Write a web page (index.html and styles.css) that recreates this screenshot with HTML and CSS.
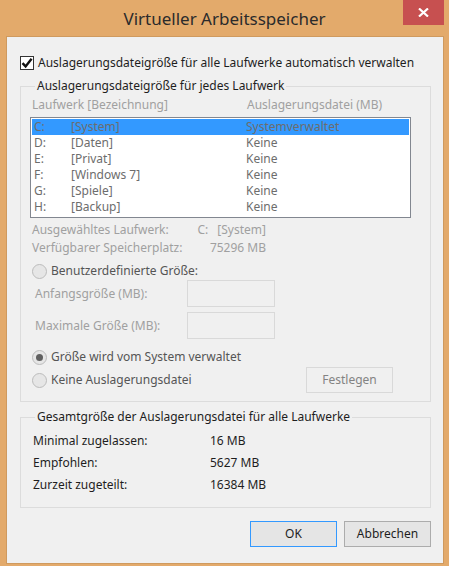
FILE: index.html
```html
<!DOCTYPE html>
<html>
<head>
	<meta charset="utf-8"/>
	<title>Virtueller Arbeitsspeicher</title>
	<link rel="stylesheet" href="styles.css">
</head>
<body>
	<div id="dialog">
		<div id="caption">
			<span class="caption-title">Virtueller Arbeitsspeicher</span>
			<div class="close">
				<svg width="11" height="9" viewBox="0 0 11 9"><path d="M1 0.5L10 8.5M10 0.5L1 8.5" stroke="#fff" stroke-width="2.2" fill="none"/></svg>
			</div>
		</div>
		<div id="client">
			<label class="auto">
				<span class="checkbox"><svg width="12" height="12" viewBox="0 0 12 12"><path d="M1.5 6.2L4.6 9.4L10.6 1.8" stroke="#111" stroke-width="2.4" fill="none"/></svg></span>
				Auslagerungsdateigröße für alle Laufwerke automatisch verwalten
			</label>
			<fieldset class="group" id="drives">
				<legend>Auslagerungsdateigröße für jedes Laufwerk</legend>
				<div class="columns">
					<span>Laufwerk [Bezeichnung]</span>
					<span>Auslagerungsdatei (MB)</span>
				</div>
				<ul id="list">
					<li class="selected"><span>C:</span><span>[System]</span><span>Systemverwaltet</span></li>
					<li><span>D:</span><span>[Daten]</span><span>Keine</span></li>
					<li><span>E:</span><span>[Privat]</span><span>Keine</span></li>
					<li><span>F:</span><span>[Windows 7]</span><span>Keine</span></li>
					<li><span>G:</span><span>[Spiele]</span><span>Keine</span></li>
					<li><span>H:</span><span>[Backup]</span><span>Keine</span></li>
				</ul>
				<div class="info selected-drive">
					<span>Ausgewähltes Laufwerk:</span>
					<span class="drive-name"><span>C:</span><span>[System]</span></span>
				</div>
				<div class="info">
					<span>Verfügbarer Speicherplatz:</span>
					<span>75296 MB</span>
				</div>
				<label class="option custom"><span class="radio"></span>Benutzerdefinierte Größe:</label>
				<div class="size-row initial-size">
					<span>Anfangsgröße (MB):</span>
					<span class="textbox"></span>
				</div>
				<div class="size-row">
					<span>Maximale Größe (MB):</span>
					<span class="textbox"></span>
				</div>
				<label class="option system"><span class="radio checked"></span>Größe wird vom System verwaltet</label>
				<div class="last-row">
					<label class="option"><span class="radio"></span>Keine Auslagerungsdatei</label>
					<div class="button disabled">Festlegen</div>
				</div>
			</fieldset>
			<fieldset class="group" id="total">
				<legend>Gesamtgröße der Auslagerungsdatei für alle Laufwerke</legend>
				<div class="total-row first-total"><span>Minimal zugelassen:</span><span>16 MB</span></div>
				<div class="total-row"><span>Empfohlen:</span><span>5627 MB</span></div>
				<div class="total-row"><span>Zurzeit zugeteilt:</span><span>16384 MB</span></div>
			</fieldset>
			<div id="buttons">
				<div class="button default">OK</div>
				<div class="button">Abbrechen</div>
			</div>
		</div>
	</div>
</body>
</html>
```

FILE: styles.css
```css
html,body,ul{
	margin:0;
	padding:0;
}
li{
	list-style:none;
}
body{
	background:#e3aa6b;
	font-family:"Noto Sans","DejaVu Sans",sans-serif;
	font-size:12px;
	line-height:16px;
	color:#1e1e1e;
}
#dialog{
	width:449px;
	height:566px;
	position:relative;
}
#caption{
	height:36px;
	display:flex;
	justify-content:center;
	align-items:center;
}
.caption-title{
	font-size:17px;
	color:#2b2b2b;
	padding-top:2px;
}
.close{
	position:absolute;
	top:0;
	left:403px;
	width:41px;
	height:25px;
	background:#c75050;
	display:flex;
	align-items:center;
	justify-content:center;
}
#client{
	margin-left:6px;
	width:436px;
	height:526px;
	border:1px solid #cf9a5f;
	background:#f0f0f0;
}
.auto{
	display:flex;
	align-items:center;
	margin:18px 0 0 13px;
	height:16px;
	gap:4px;
}
.checkbox{
	width:12px;
	height:12px;
	border:1px solid #333;
	background:#fff;
	display:flex;
	align-items:center;
	justify-content:center;
}
.group{
	margin:7px 0 0 13px;
	width:411px;
	box-sizing:border-box;
	border:1px solid #dcdcdc;
	padding:0 19px 0 9px;
}
.group legend{
	padding:0 2px;
	margin-left:5px;
	color:#1e1e1e;
}
.columns{
	margin-top:3px;
	padding-left:2px;
	display:grid;
	grid-template-columns:215px auto;
	color:#a0a0a0;
}
#list{
	margin-top:4px;
	border:1px solid #828790;
	background:#fff;
	padding:1px 1px 2px 1px;
	color:#6d6d6d;
}
#list li{
	height:16px;
	padding-left:2px;
	display:grid;
	grid-template-columns:37px 175px auto;
}
#list .selected{
	background:#3399ff;
}
.info{
	width:234px;
	padding-left:2px;
	display:flex;
	justify-content:space-between;
	color:#a0a0a0;
	margin-top:2px;
}
.info.selected-drive{
	margin-top:4px;
}
.drive-name{
	display:flex;
	gap:9px;
}
.option{
	display:flex;
	align-items:center;
	gap:4px;
	padding-left:2px;
	height:16px;
	color:#555;
}
.option.custom{
	margin-top:7px;
}
.option.system{
	margin-top:10px;
}
.radio{
	width:13px;
	height:13px;
	border:1px solid #bcbcbc;
	border-radius:50%;
	background:#e6e6e6;
	display:flex;
	align-items:center;
	justify-content:center;
}
.radio.checked::after{
	content:"";
	width:7px;
	height:7px;
	border-radius:50%;
	background:#606060;
}
.size-row{
	display:grid;
	grid-template-columns:152px 88px;
	align-items:center;
	padding-left:5px;
	color:#a0a0a0;
	margin-top:5px;
}
.size-row.initial-size{
	margin-top:1px;
}
.textbox{
	height:25px;
	border:1px solid #d9d9d9;
	background:#f0f0f0;
}
.last-row{
	display:flex;
	justify-content:space-between;
	align-items:center;
	margin-top:2px;
	padding-right:18px;
	padding-bottom:8px;
}
.button{
	width:85px;
	height:24px;
	border:1px solid #acacac;
	background:#e5e5e5;
	display:flex;
	align-items:center;
	justify-content:center;
	color:#1e1e1e;
}
.button.disabled{
	border-color:#d9d9d9;
	background:#f0f0f0;
	color:#838383;
}
.button.default{
	border-color:#3399ff;
}
#total{
	margin-top:7px;
	padding-bottom:11px;
}
.total-row{
	display:grid;
	grid-template-columns:177px auto;
	padding-left:3px;
	height:22px;
	align-items:center;
}
.total-row.first-total{
	margin-top:5px;
}
#buttons{
	display:flex;
	justify-content:flex-end;
	gap:7px;
	margin:13px 12px 0 0;
}
```
